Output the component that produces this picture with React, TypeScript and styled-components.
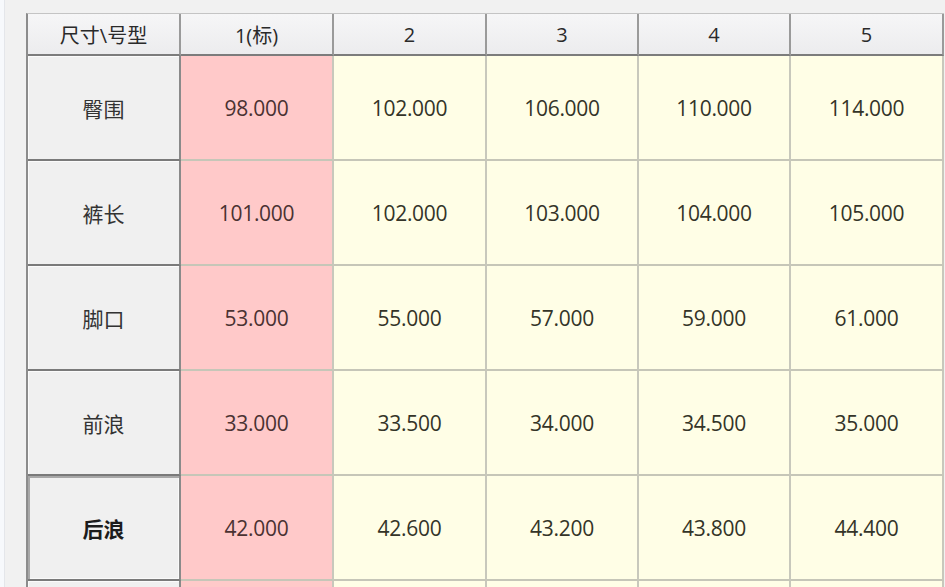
import { Fragment } from 'react'
import styled, { createGlobalStyle } from 'styled-components'

const GlobalStyle = createGlobalStyle`
  html, body {
    margin: 0;
    padding: 0;
    background: #f0f0f0;
    overflow: hidden;
  }
  body {
    font-family: 'Open Sans', 'Noto Sans', 'Noto Sans CJK SC', sans-serif;
  }
`

const sizes = ['1(标)', '2', '3', '4', '5']

const rows = [
  { name: '臀围', values: ['98.000', '102.000', '106.000', '110.000', '114.000'] },
  { name: '裤长', values: ['101.000', '102.000', '103.000', '104.000', '105.000'] },
  { name: '脚口', values: ['53.000', '55.000', '57.000', '59.000', '61.000'] },
  { name: '前浪', values: ['33.000', '33.500', '34.000', '34.500', '35.000'] },
  { name: '后浪', values: ['42.000', '42.600', '43.200', '43.800', '44.400'], selected: true },
  { name: '', values: ['', '', '', '', ''] },
]

const Window = styled.div`
  width: 945px;
  height: 587px;
  display: flex;
  background: #f0f0f0;
  overflow: hidden;
`

const SideStrip = styled.div`
  width: 4px;
  flex-shrink: 0;
  background: #f7f9fc;
  border-right: 1px solid #e4e6ea;
`

const Panel = styled.div`
  flex: 1;
  padding: 13px 0 0 21px;
  background: #f1f1f1;
`

const Grid = styled.div`
  display: grid;
  grid-template-columns: 153px 153px 153px 152px 152px 153px;
  grid-auto-rows: 105px;
  grid-template-rows: 42px;
  border-left: 2px solid #8c8c8c;
  border-top: 1px solid #c4c4c4;
  width: 916px;
`

const HeadCell = styled.div`
  display: flex;
  align-items: center;
  justify-content: center;
  background: linear-gradient(#f6f6f7, #ececee);
  border-right: 2px solid #9a9a9a;
  border-bottom: 2px solid #7c7c7c;
  font-size: 20px;
  color: #2a2a2a;
`

const RowHead = styled.div<{ $selected?: boolean }>`
  display: flex;
  align-items: center;
  justify-content: center;
  background: #f0f0f0;
  border-right: 2px solid #8a8a8a;
  border-bottom: 2px solid #7a7a7a;
  box-shadow: ${(p) => (p.$selected ? 'inset 2px 2px 0 #a8a8a8, inset -1px -1px 0 #fafafa' : 'inset 1px 1px 0 #fbfbfb')};
  font-size: 21px;
  font-weight: ${(p) => (p.$selected ? 700 : 400)};
  color: ${(p) => (p.$selected ? '#1c1c1c' : '#333')};
`

const DataCell = styled.div<{ $standard?: boolean }>`
  display: flex;
  align-items: center;
  justify-content: center;
  background: ${(p) => (p.$standard ? '#ffc9c9' : '#fffee6')};
  border-right: 2px solid #c8c8bc;
  border-bottom: 2px solid #c6c6b8;
  font-size: 21px;
  color: ${(p) => (p.$standard ? '#4a3232' : '#343428')};
  letter-spacing: -0.3px;
`

export default function App() {
  return (
    <>
      <GlobalStyle />
      <Window>
        <SideStrip />
        <Panel>
          <Grid>
            <HeadCell>尺寸\号型</HeadCell>
            {sizes.map((s) => (
              <HeadCell key={s}>{s}</HeadCell>
            ))}
            {rows.map((r, i) => (
              <Fragment key={i}>
                <RowHead $selected={r.selected}>{r.name}</RowHead>
                {r.values.map((v, j) => (
                  <DataCell key={j} $standard={j === 0}>
                    {v}
                  </DataCell>
                ))}
              </Fragment>
            ))}
          </Grid>
        </Panel>
      </Window>
    </>
  )
}
